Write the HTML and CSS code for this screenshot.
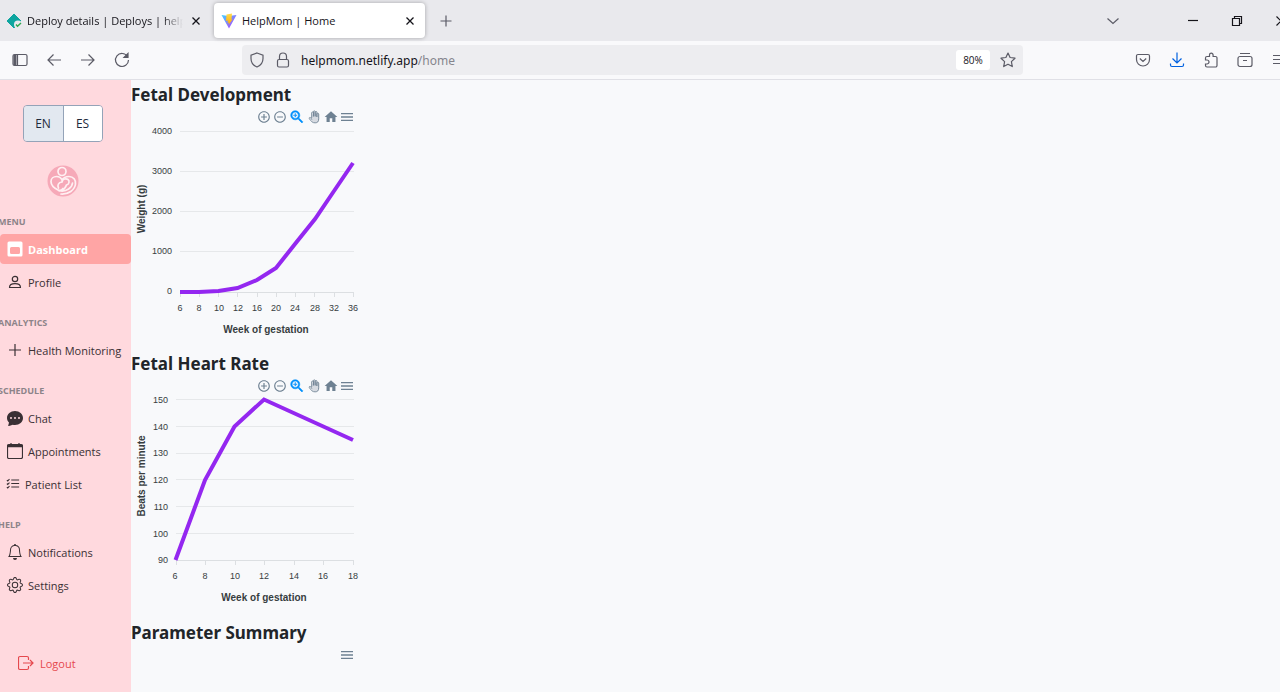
FILE: index.html
```html
<!DOCTYPE html>
<html lang="en">
<head>
<meta charset="utf-8">
<title>HelpMom | Home</title>
<link rel="stylesheet" href="styles.css">
</head>
<body>
<svg class="sprite" aria-hidden="true">
  <symbol id="zoom-in" viewBox="0 0 24 24"><path d="M13 7h-2v4H7v2h4v4h2v-4h4v-2h-4V7zm-1-5C6.480 2 2 6.480 2 12s4.480 10 10 10 10-4.480 10-10S17.520 2 12 2zm0 18c-4.410 0-8-3.590-8-8s3.590-8 8-8 8 3.590 8 8-3.590 8-8 8z"/></symbol>
  <symbol id="zoom-out" viewBox="0 0 24 24"><path d="M7 11v2h10v-2H7zm5-9C6.480 2 2 6.480 2 12s4.480 10 10 10 10-4.480 10-10S17.520 2 12 2zm0 18c-4.410 0-8-3.590-8-8s3.590-8 8-8 8 3.590 8 8-3.590 8-8 8z"/></symbol>
  <symbol id="select" viewBox="2 2 20 20"><path d="M15.500 14h-.79l-.28-.27C15.410 12.590 16 11.110 16 9.500 16 5.910 13.090 3 9.500 3S3 5.910 3 9.500 5.910 16 9.500 16c1.610 0 3.090-.59 4.230-1.570l.27.28v.79l5 4.990L20.490 19l-4.990-5zm-6 0C7.010 14 5 11.990 5 9.500S7.010 5 9.500 5 14 7.010 14 9.500 11.990 14 9.500 14z" stroke="currentColor" stroke-width=".8"/><path d="M12 10h-2v2H9v-2H7V9h2V7h1v2h2v1z" stroke="currentColor" stroke-width=".5"/></symbol>
  <symbol id="pan" viewBox="0 0 24 24"><path d="M11 4.500a1.500 1.500 0 0 1 3 0V11h1V5a1.500 1.500 0 0 1 2.500 0v7h1V7.500a1.200 1.200 0 0 1 2.500 0V16c0 4-2 6-6 6-4 0-6-2-9-6z" opacity=".25"/><path fill="none" stroke="currentColor" stroke-width="1.500" stroke-linejoin="round" stroke-linecap="round" d="M8 13V5a1.500 1.500 0 0 1 3 0v6V3a1.500 1.500 0 0 1 3 0v8V4a1.500 1.500 0 0 1 3 0v8V7a1.500 1.500 0 0 1 3 0v8c0 5-2 7-6 7-5 0-6-2-10-7-1-2 1-3 2-2l2 3"/></symbol>
  <symbol id="home" viewBox="1 1 22 22"><path d="M10 20v-6h4v6h5v-8h3L12 3 2 12h3v8z"/></symbol>
  <symbol id="menu" viewBox="0 0 24 24"><path d="M3 18h18v-2H3v2zm0-5h18v-2H3v2zm0-7v2h18V6H3z"/></symbol>
  <symbol id="close" viewBox="0 0 16 16"><path d="M4.500 4.500l7 7m0-7l-7 7" fill="none" stroke="currentColor" stroke-width="1.300"/></symbol>
</svg>

<header class="browser">
  <div class="tabs">
    <div class="tab">
      <svg class="icon" viewBox="0 0 16 16"><path d="M8 1l7 7-7 7-7-7z" fill="#0ea5a0" stroke="#0ea5a0" stroke-linejoin="round"/><circle cx="12" cy="11.500" r="4" fill="#e9e9ed"/><path d="M10 11.500l1.500 1.700L15 10" fill="none" stroke="#2fa84f" stroke-width="1.500"/></svg>
      <span class="tab-title fade">Deploy details | Deploys | helpm</span>
      <button class="icon-btn" aria-label="Close tab"><svg class="icon"><use href="#close"/></svg></button>
    </div>
    <div class="tab active">
      <svg class="icon" viewBox="0 0 32 32"><defs><linearGradient id="va" x2="1" y2="1"><stop offset="0" stop-color="#41d1ff"/><stop offset="1" stop-color="#bd34fe"/></linearGradient><linearGradient id="vb" x2="0" y2="1"><stop offset="0" stop-color="#ffdd50"/><stop offset="1" stop-color="#ffa800"/></linearGradient></defs><path d="M1 4l14 2 16-2-15 27z" fill="url(#va)"/><path d="M22 1l-11 2-1 13 4-1-1 5 3-1-1 5 8-11-2 0z" fill="url(#vb)"/></svg>
      <span class="tab-title">HelpMom | Home</span>
      <button class="icon-btn" aria-label="Close tab"><svg class="icon"><use href="#close"/></svg></button>
    </div>
    <button class="icon-btn new-tab" aria-label="New tab"><svg class="icon line" viewBox="0 0 16 16"><path d="M8 2.500v11M2.500 8h11"/></svg></button>
    <div class="window-controls">
      <button class="icon-btn list-tabs" aria-label="List all tabs"><svg class="icon line" viewBox="0 0 16 16"><path d="M2.500 5.500L8 10.500l5.500-5"/></svg></button>
      <button class="icon-btn" aria-label="Minimize"><svg class="icon line dark" viewBox="0 0 16 16"><path d="M3 7.500h10"/></svg></button>
      <button class="icon-btn" aria-label="Restore"><svg class="icon line dark" viewBox="0 0 16 16"><path d="M3.500 5.500h7v7h-7zM5.500 5.500v-2h7v7h-2"/></svg></button>
      <button class="icon-btn" aria-label="Close window"><svg class="icon line dark" viewBox="0 0 16 16"><path d="M3.500 3.500l9 9m0-9l-9 9"/></svg></button>
    </div>
  </div>
  <div class="toolbar">
    <div class="nav-buttons">
      <button class="icon-btn" aria-label="Sidebar"><svg class="icon line" viewBox="0 0 16 16"><rect x="1" y="2.500" width="14" height="11" rx="1.500"/><path d="M5.500 3v10" /><path d="M3 3v10" stroke-width="3"/></svg></button>
      <button class="icon-btn" aria-label="Back"><svg class="icon line" viewBox="0 0 16 16"><path d="M15 8H2m5.500-5.500L2 8l5.500 5.500"/></svg></button>
      <button class="icon-btn" aria-label="Forward"><svg class="icon line" viewBox="0 0 16 16"><path d="M1 8h13M8.500 2.500L14 8l-5.500 5.500"/></svg></button>
      <button class="icon-btn" aria-label="Reload"><svg class="icon line" viewBox="0 0 16 16"><path d="M13.500 4.500A6.500 6.500 0 1 0 14.500 8"/><path d="M14 1.500v4h-4z" fill="currentColor"/></svg></button>
    </div>
    <div class="url-bar">
      <svg class="icon line" viewBox="0 0 16 16"><path d="M8 1l6 2.200v3.300c0 4-2.300 7-6 8.500-3.700-1.500-6-4.500-6-8.500V3.200z"/></svg>
      <svg class="icon line" viewBox="0 0 16 16"><rect x="2.500" y="7.500" width="11" height="7.500" rx="1.500"/><path d="M4.500 7.500V4.500a3.500 3.500 0 0 1 7 0v3"/></svg>
      <span class="url">helpmom.netlify.app<span class="path">/home</span></span>
      <button class="zoom-level">80%</button>
      <button class="icon-btn" aria-label="Bookmark"><svg class="icon line" viewBox="0 0 16 16"><path stroke-linejoin="round" d="M8 1l2.100 4.500 4.900.7-3.600 3.400.9 5L8 12.200l-4.300 2.400.9-5L1 6.200l4.900-.7z"/></svg></button>
    </div>
    <div class="tool-buttons">
      <button class="icon-btn" aria-label="Pocket"><svg class="icon line" viewBox="0 0 16 16"><path d="M3 2.500h10a1.500 1.500 0 0 1 1.500 1.500v3.500a6.500 6.500 0 0 1-13 0V4A1.500 1.500 0 0 1 3 2.500zM4.800 6.500L8 9.500l3.200-3"/></svg></button>
      <button class="icon-btn download" aria-label="Downloads"><svg class="icon line" viewBox="0 0 16 16"><path d="M8 .500v10M3.500 6.500L8 11l4.500-4.500M1.500 11.500v1.500a1.500 1.500 0 0 0 1.500 1.500h10a1.500 1.500 0 0 0 1.500-1.500v-1.500"/></svg></button>
      <button class="icon-btn" aria-label="Extensions"><svg class="icon line" viewBox="0 0 16 16"><path d="M2.500 8V6A1.500 1.500 0 0 1 4 4.500h2.500V3a1.800 1.800 0 0 1 3.600 0v1.500h2.400A1.500 1.500 0 0 1 14 6v7.500a1.500 1.500 0 0 1-1.500 1.500H4a1.500 1.500 0 0 1-1.500-1.500V12H4a1.900 1.900 0 0 0 0-4z"/></svg></button>
      <button class="icon-btn" aria-label="Library"><svg class="icon line" viewBox="0 0 16 16"><rect x="1" y="4.500" width="14" height="10" rx="2"/><path d="M3 1.500h10M6 8.500h4"/></svg></button>
      <button class="icon-btn" aria-label="Menu"><svg class="icon line" viewBox="0 0 16 16"><path d="M2 3.500h12M2 7.500h12M2 11.500h12"/></svg></button>
    </div>
  </div>
</header>

<div class="app">
  <aside class="sidebar">
    <div class="brand">
      <div class="lang" role="group" aria-label="Language">
        <button class="lang-btn selected">EN</button><button class="lang-btn">ES</button>
      </div>
      <svg class="logo" viewBox="0 0 32 32" role="img" aria-label="HelpMom"><circle cx="16" cy="16" r="15.500" fill="#f6a9b8"/><g fill="none" stroke="#fff0f2" stroke-width="1.700" stroke-linecap="round"><circle cx="15" cy="6.500" r="4"/><path d="M16 23.500c-1.500 2-3 2.500-5 1.500C7 23 4 20 4 16.500c0-3 2.500-5 5.500-5 2.500 0 4.500 1.200 5.500 3.500 1.500-2.500 4-3.500 7-3.500 4.500 0 7 3.500 6.500 7.500-.7 6-7 10.500-14.500 10"/><path d="M11.500 23c-1.500-3 0-5.500 3.500-6 .5-3 4-4 6-2.500s1 5-1.500 5.500c-1 3-2.500 4.500-5.500 6 5.500.5 11-3 11.500-8"/></g></svg>
    </div>
    <nav class="nav">
      <section class="group">
        <h2 class="label">MENU</h2>
        <a class="item current" href="#"><svg class="icon" viewBox="0 0 16 16"><path fill-rule="evenodd" d="M2 .5h12A1.500 1.500 0 0 1 15.500 2v12a1.500 1.500 0 0 1-1.500 1.500H2A1.500 1.500 0 0 1 .5 14V2A1.500 1.500 0 0 1 2 .5zM4.500 6A1.500 1.500 0 0 0 3 7.500v4A1.500 1.500 0 0 0 4.500 13h7a1.500 1.500 0 0 0 1.500-1.500v-4A1.500 1.500 0 0 0 11.500 6z"/></svg>Dashboard</a>
        <a class="item" href="#"><svg class="icon line" viewBox="0 0 16 16"><circle cx="8" cy="5" r="2.700"/><path d="M2.500 13.500c0-2.500 2-3.800 5.500-3.800s5.500 1.300 5.500 3.800z" stroke-linejoin="round"/></svg>Profile</a>
      </section>
      <section class="group">
        <h2 class="label">ANALYTICS</h2>
        <a class="item" href="#"><svg class="icon line" viewBox="0 0 16 16"><path d="M8 2v12M2 8h12"/></svg>Health Monitoring</a>
      </section>
      <section class="group">
        <h2 class="label">SCHEDULE</h2>
        <a class="item" href="#"><svg class="icon" viewBox="0 0 16 16"><path fill-rule="evenodd" d="M16 8c0 3.866-3.582 7-8 7a9 9 0 0 1-2.347-.306c-.584.296-1.925.864-4.181 1.234-.2.032-.352-.176-.273-.362.354-.836.674-1.950.770-2.966C.744 11.370 0 9.760 0 8c0-3.866 3.582-7 8-7s8 3.134 8 7M5 8a1 1 0 1 0-2 0 1 1 0 0 0 2 0m4 0a1 1 0 1 0-2 0 1 1 0 0 0 2 0m3 1a1 1 0 1 0 0-2 1 1 0 0 0 0 2"/></svg>Chat</a>
        <a class="item" href="#"><svg class="icon line" viewBox="0 0 16 16"><rect x=".5" y="1.500" width="15" height="14" rx="1.500"/><path d="M.500 3h15" stroke-width="2.500"/><path d="M4 0v2M12 0v2"/></svg>Appointments</a>
        <a class="item compact" href="#"><svg class="icon line" viewBox="0 0 16 16"><path d="M6 3.500h9M6 7.500h9M6 11.500h9M1 3.500l1 1 2-2M1 7.500l1 1 2-2M1 11.500l1 1 2-2"/></svg>Patient List</a>
      </section>
      <section class="group">
        <h2 class="label">HELP</h2>
        <a class="item" href="#"><svg class="icon" viewBox="0 0 16 16"><path d="M8 16a2 2 0 0 0 2-2H6a2 2 0 0 0 2 2M8 1.918l-.797.161A4 4 0 0 0 4 6c0 .628-.134 2.197-.459 3.742-.16.767-.376 1.566-.663 2.258h10.244c-.287-.692-.502-1.490-.663-2.258C12.134 8.197 12 6.628 12 6a4 4 0 0 0-3.203-3.920zM14.220 12c.223.447.481.801.78 1H1c.299-.199.557-.553.78-1C2.680 10.200 3 6.880 3 6c0-2.420 1.720-4.440 4.005-4.901a1 1 0 1 1 1.990 0A5 5 0 0 1 13 6c0 .88.32 4.200 1.220 6"/></svg>Notifications</a>
        <a class="item" href="#"><svg class="icon" viewBox="0 0 16 16"><path d="M8 4.754a3.246 3.246 0 1 0 0 6.492 3.246 3.246 0 0 0 0-6.492M5.754 8a2.246 2.246 0 1 1 4.492 0 2.246 2.246 0 0 1-4.492 0"/><path d="M9.796 1.343c-.527-1.790-3.065-1.790-3.592 0l-.094.319a.873.873 0 0 1-1.255.52l-.292-.16c-1.640-.892-3.433.902-2.540 2.541l.159.292a.873.873 0 0 1-.52 1.255l-.319.094c-1.790.527-1.790 3.065 0 3.592l.319.094a.873.873 0 0 1 .52 1.255l-.16.292c-.892 1.640.901 3.434 2.541 2.540l.292-.159a.873.873 0 0 1 1.255.52l.094.319c.527 1.790 3.065 1.790 3.592 0l.094-.319a.873.873 0 0 1 1.255-.52l.292.16c1.640.893 3.434-.902 2.540-2.541l-.159-.292a.873.873 0 0 1 .52-1.255l.319-.094c1.790-.527 1.790-3.065 0-3.592l-.319-.094a.873.873 0 0 1-.52-1.255l.16-.292c.893-1.640-.902-3.433-2.541-2.540l-.292.159a.873.873 0 0 1-1.255-.52zm-2.633.283c.246-.835 1.428-.835 1.674 0l.094.319a1.873 1.873 0 0 0 2.693 1.115l.291-.16c.764-.415 1.600.42 1.184 1.185l-.159.292a1.873 1.873 0 0 0 1.116 2.692l.318.094c.835.246.835 1.428 0 1.674l-.319.094a1.873 1.873 0 0 0-1.115 2.693l.16.291c.415.764-.42 1.600-1.185 1.184l-.291-.159a1.873 1.873 0 0 0-2.693 1.116l-.094.318c-.246.835-1.428.835-1.674 0l-.094-.319a1.873 1.873 0 0 0-2.692-1.115l-.292.16c-.764.415-1.600-.42-1.184-1.185l.159-.291A1.873 1.873 0 0 0 1.945 8.930l-.319-.094c-.835-.246-.835-1.428 0-1.674l.319-.094A1.873 1.873 0 0 0 3.060 4.377l-.16-.292c-.415-.764.42-1.600 1.185-1.184l.292.159a1.873 1.873 0 0 0 2.692-1.115z"/></svg>Settings</a>
      </section>
      <a class="item logout" href="#"><svg class="icon line" viewBox="0 0 16 16"><path d="M10.500 5V3A1.500 1.500 0 0 0 9 1.500H2A1.500 1.500 0 0 0 .5 3v10A1.500 1.500 0 0 0 2 14.500h7a1.500 1.500 0 0 0 1.500-1.500v-2M5 8h10M12 5l3 3-3 3"/></svg>Logout</a>
    </nav>
  </aside>

  <main class="content">
    <section class="chart">
      <h1 class="title">Fetal Development</h1>
      <div class="chart-tools">
        <button class="tool" aria-label="Zoom in"><svg><use href="#zoom-in"/></svg></button>
        <button class="tool" aria-label="Zoom out"><svg><use href="#zoom-out"/></svg></button>
        <button class="tool wide on" aria-label="Selection zoom"><svg><use href="#select"/></svg></button>
        <button class="tool wide" aria-label="Pan"><svg><use href="#pan"/></svg></button>
        <button class="tool wide" aria-label="Reset zoom"><svg><use href="#home"/></svg></button>
        <button class="tool burger" aria-label="Menu"><svg><use href="#menu"/></svg></button>
      </div>
      <svg class="plot" viewBox="0 0 230 225" role="img" aria-label="Weight by week of gestation">
        <path class="grid" d="M49 3.500h174M49 43.500h174M49 83.500h174M49 123.500h174"/>
        <path class="axis" d="M49 164.500h174M49.500 164v5M68.500 164v5M87.500 164v5M106.500 164v5M126.500 164v5M145.500 164v5M164.500 164v5M183.500 164v5M203.500 164v5M222.500 164v5"/>
        <path class="series" d="M49 164l19 0 19.500-1 19-3 19.500-8 19-12 19-24 20-25 19-28 19-28"/>
        <g class="ticks end"><text x="41" y="6">4000</text><text x="41" y="46">3000</text><text x="41" y="86">2000</text><text x="41" y="126">1000</text><text x="41" y="166">0</text></g>
        <g class="ticks mid"><text x="49" y="183">6</text><text x="68" y="183">8</text><text x="88" y="183">10</text><text x="107" y="183">12</text><text x="126" y="183">16</text><text x="145" y="183">20</text><text x="164" y="183">24</text><text x="184" y="183">28</text><text x="203" y="183">32</text><text x="222" y="183">36</text></g>
        <text class="axis-title" x="135" y="205">Week of gestation</text>
        <text class="axis-title" transform="translate(14 81) rotate(-90)">Weight (g)</text>
      </svg>
    </section>
    <section class="chart">
      <h1 class="title">Fetal Heart Rate</h1>
      <div class="chart-tools">
        <button class="tool" aria-label="Zoom in"><svg><use href="#zoom-in"/></svg></button>
        <button class="tool" aria-label="Zoom out"><svg><use href="#zoom-out"/></svg></button>
        <button class="tool wide on" aria-label="Selection zoom"><svg><use href="#select"/></svg></button>
        <button class="tool wide" aria-label="Pan"><svg><use href="#pan"/></svg></button>
        <button class="tool wide" aria-label="Reset zoom"><svg><use href="#home"/></svg></button>
        <button class="tool burger" aria-label="Menu"><svg><use href="#menu"/></svg></button>
      </div>
      <svg class="plot" viewBox="0 0 230 225" role="img" aria-label="Beats per minute by week of gestation">
        <path class="grid" d="M45 2.500h178M45 29.500h178M45 56.500h178M45 82.500h178M45 109.500h178M45 136.500h178"/>
        <path class="axis" d="M45 163.500h178M45.500 163v5M74.500 163v5M104.500 163v5M133.500 163v5M163.500 163v5M192.500 163v5M222.500 163v5"/>
        <path class="series" d="M44.500 163L74 83 103.500 29.500 133 2.500 222 43"/>
        <g class="ticks end"><text x="37" y="6">150</text><text x="37" y="33">140</text><text x="37" y="59">130</text><text x="37" y="86">120</text><text x="37" y="113">110</text><text x="37" y="140">100</text><text x="37" y="166">90</text></g>
        <g class="ticks mid"><text x="44" y="182">6</text><text x="74" y="182">8</text><text x="104" y="182">10</text><text x="133" y="182">12</text><text x="163" y="182">14</text><text x="192" y="182">16</text><text x="222" y="182">18</text></g>
        <text class="axis-title" x="133" y="204">Week of gestation</text>
        <text class="axis-title" transform="translate(14 79) rotate(-90)">Beats per minute</text>
      </svg>
    </section>
    <section class="chart">
      <h1 class="title">Parameter Summary</h1>
      <div class="chart-tools">
        <button class="tool burger" aria-label="Menu"><svg><use href="#menu"/></svg></button>
      </div>
    </section>
  </main>
</div>
</body>
</html>
```

FILE: styles.css
```css
* { box-sizing: border-box; }
body {
  margin: 0;
  min-height: 100vh;
  display: flex;
  flex-direction: column;
  overflow: hidden;
  background: #f8f9fb;
  color: #212529;
  font-family: "Open Sans", "Noto Sans", sans-serif;
  font-size: 12px;
}
button { border: 0; padding: 0; background: none; color: inherit; font: inherit; }
.sprite { display: none; }
.icon { width: 16px; height: 16px; flex: none; fill: currentColor; display: block; }
.line { fill: none; stroke: currentColor; stroke-width: 1.2; }
.dark { color: #15141a; }
.icon-btn { width: 16px; flex: none; }

/* Browser frame */
.browser { color: #5b5b66; }
.tabs { display: flex; align-items: center; height: 41px; padding: 3px 0; background: #e9e9ed; }
.tab { display: flex; align-items: center; width: 211px; height: 35px; padding: 0 7px; gap: 5px; border-radius: 4px; color: #15141a; font-size: 11px; }
.tab:first-child { padding-left: 6px; margin-right: 3px; }
.tab.active { background: #fff; box-shadow: 0 0 4px rgba(0, 0, 0, .3); }
.tab-title { flex: 1; min-width: 0; white-space: nowrap; }
.fade { mask-image: linear-gradient(to left, transparent, #000 20px); }
.new-tab { margin-left: 13px; }
.window-controls { display: flex; gap: 28px; margin-left: auto; margin-right: -9px; }
.list-tabs { margin-right: 36px; }
.toolbar { display: flex; align-items: center; height: 39px; border-bottom: 1px solid #e0e0e6; background: #f9f9fb; }
.nav-buttons { display: flex; gap: 18px; width: 242px; padding-left: 12px; }
.url-bar { display: flex; flex: 1; align-items: center; height: 30px; padding: 0 7px; gap: 10px; border-radius: 4px; background: #ededf0; }
.url { flex: 1; color: #15141a; font-family: "Noto Sans", "Open Sans", sans-serif; font-size: 12px; }
.path { color: #85858d; }
.zoom-level { width: 34px; height: 20px; border-radius: 3px; background: #fff; color: #15141a; font-size: 10px; }
.tool-buttons { display: flex; justify-content: flex-end; gap: 18px; width: 264px; margin-right: -7px; }
.download { color: #0061e0; }

/* Sidebar */
.app { display: flex; flex: 1; }
.sidebar { width: 131px; flex: none; padding-top: 25px; overflow: hidden; background: #ffd9de; }
.brand { display: flex; flex-direction: column; align-items: center; gap: 23px; width: 125px; }
.lang { display: flex; border: 1px solid #94a3b8; border-radius: 4px; overflow: hidden; }
.lang-btn { width: 38px; height: 35px; background: #fff; color: #1e293b; }
.lang-btn.selected { width: 40px; border-right: 1px solid #94a3b8; background: #e2e8f0; }
.logo { width: 32px; height: 32px; }
.nav { padding-top: 18px; }
.group { display: flex; flex-direction: column; gap: 3px; margin-bottom: 19px; }
.label { margin: 0 0 2px -2px; color: #8d8489; font-size: 9px; font-weight: 700; line-height: 14px; }
.item { display: flex; align-items: center; gap: 5px; height: 30px; padding-left: 7px; color: #3a3034; font-size: 11px; text-decoration: none; white-space: nowrap; }
.item.current { border-radius: 4px; background: #ffa5a5; color: #fff; font-weight: 700; }
.compact { padding-left: 6px; }
.compact .icon { width: 14px; height: 14px; }
.logout { margin-top: 48px; padding-left: 18px; gap: 6px; color: #e5484d; }

/* Charts */
.content { flex: 1; min-width: 0; padding-top: 4px; }
.chart { width: 230px; }
.title { margin: 0; font-family: "Noto Sans", "Open Sans", sans-serif; font-size: 17px; font-weight: 700; line-height: 22px; white-space: nowrap; }
.chart-tools { display: flex; align-items: center; justify-content: flex-end; height: 22px; padding-right: 6px; color: #6e8192; }
.tool { display: flex; align-items: center; justify-content: center; width: 16px; }
.tool.wide { width: 17px; }
.tool svg { width: 14px; height: 14px; flex: none; fill: currentColor; }
.tool.burger svg { width: 16px; height: 16px; }
.tool.on { color: #008ffb; }
.plot { display: block; width: 100%; font-family: "Liberation Sans", Arial, sans-serif; }
.grid { stroke: #e6e8ea; }
.axis { stroke: #dcdfe2; }
.series { fill: none; stroke: #9427f0; stroke-width: 4; }
.ticks { fill: #373d3f; font-size: 9px; }
.end { text-anchor: end; }
.mid { text-anchor: middle; }
.axis-title { fill: #373d3f; font-size: 10px; font-weight: 700; text-anchor: middle; }
```
